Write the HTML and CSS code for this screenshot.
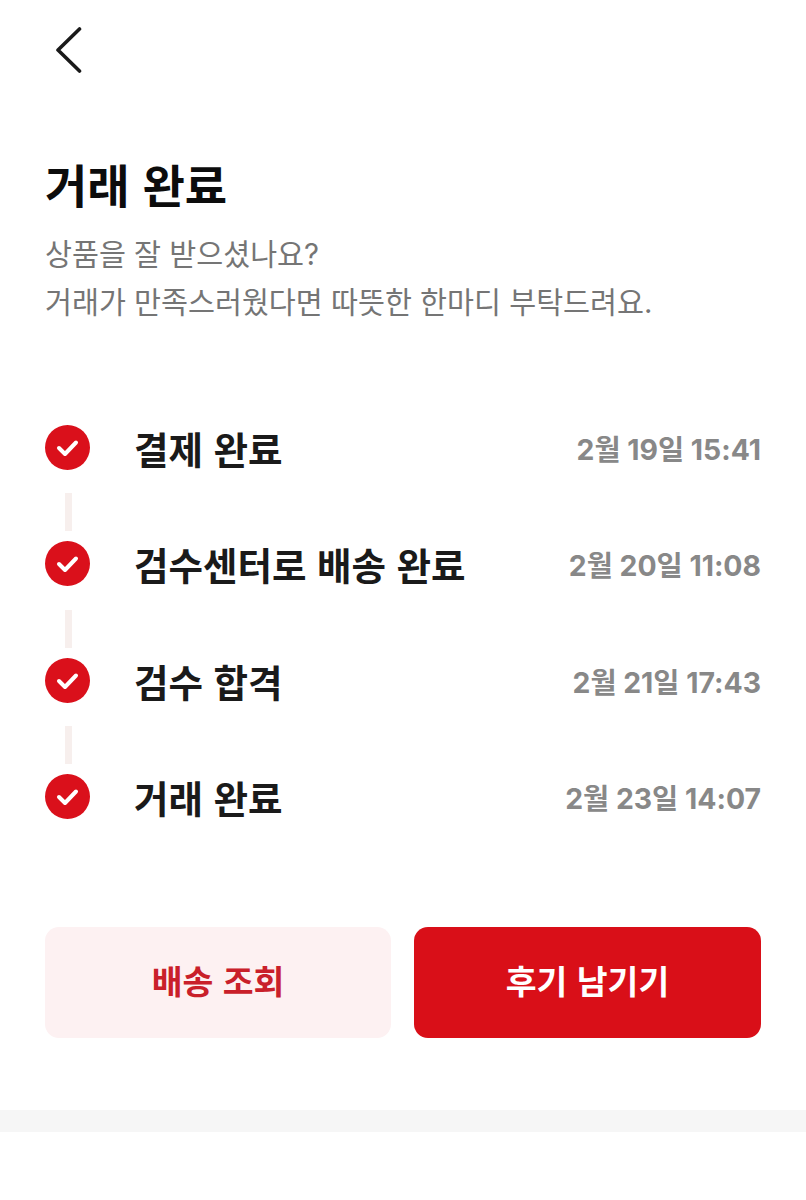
FILE: index.html
```html
<!DOCTYPE html>
<html lang="ko">
<head>
    <meta charset="UTF-8">
    <meta name="viewport" content="width=device-width, initial-scale=1.0">
    <title>거래 완료</title>
    <link rel="stylesheet" href="styles.css">
</head>
<body>
    <div class="top-bar">
        <svg class="back-icon" width="26" height="46" viewBox="0 0 26 46">
            <path d="M23.5 2 L2 23 L23.5 44" fill="none" stroke="#1a1a1a" stroke-width="3.6" stroke-linecap="round" stroke-linejoin="round"/>
        </svg>
    </div>

    <div class="intro">
        <h1>거래 완료</h1>
        <p>상품을 잘 받으셨나요?<br>거래가 만족스러웠다면 따뜻한 한마디 부탁드려요.</p>
    </div>

    <div class="steps">
        <div class="step">
            <svg class="check" width="45" height="45" viewBox="0 0 45 45">
                <circle cx="22.5" cy="22.5" r="22.5" fill="#da101b"/>
                <path d="M14 23 L20 29 L31 17.5" fill="none" stroke="#fff" stroke-width="4" stroke-linecap="round" stroke-linejoin="round"/>
            </svg>
            <div class="step-name">결제 완료</div>
            <div class="step-time">2월 19일 15:41</div>
        </div>
        <div class="line"></div>
        <div class="step">
            <svg class="check" width="45" height="45" viewBox="0 0 45 45">
                <circle cx="22.5" cy="22.5" r="22.5" fill="#da101b"/>
                <path d="M14 23 L20 29 L31 17.5" fill="none" stroke="#fff" stroke-width="4" stroke-linecap="round" stroke-linejoin="round"/>
            </svg>
            <div class="step-name">검수센터로 배송 완료</div>
            <div class="step-time">2월 20일 11:08</div>
        </div>
        <div class="line"></div>
        <div class="step">
            <svg class="check" width="45" height="45" viewBox="0 0 45 45">
                <circle cx="22.5" cy="22.5" r="22.5" fill="#da101b"/>
                <path d="M14 23 L20 29 L31 17.5" fill="none" stroke="#fff" stroke-width="4" stroke-linecap="round" stroke-linejoin="round"/>
            </svg>
            <div class="step-name">검수 합격</div>
            <div class="step-time">2월 21일 17:43</div>
        </div>
        <div class="line"></div>
        <div class="step">
            <svg class="check" width="45" height="45" viewBox="0 0 45 45">
                <circle cx="22.5" cy="22.5" r="22.5" fill="#da101b"/>
                <path d="M14 23 L20 29 L31 17.5" fill="none" stroke="#fff" stroke-width="4" stroke-linecap="round" stroke-linejoin="round"/>
            </svg>
            <div class="step-name">거래 완료</div>
            <div class="step-time">2월 23일 14:07</div>
        </div>
    </div>

    <div class="actions">
        <button class="btn btn-light">배송 조회</button>
        <button class="btn btn-red">후기 남기기</button>
    </div>

    <div class="divider"></div>
</body>
</html>
```

FILE: styles.css
```css
* {
    box-sizing: border-box;
}
body {
    margin: 0;
    background-color: #fff;
    font-family: 'Noto Sans CJK KR', 'Noto Sans', sans-serif;
}
.top-bar {
    height: 144px;
    padding: 27px 0 0 56px;
}
.back-icon {
    display: block;
}
.intro {
    padding: 0 45px;
}
h1 {
    margin: 0;
    height: 87px;
    font-size: 46px;
    line-height: 78px;
    font-weight: 700;
    color: #0c0c0c;
}
.intro p {
    margin: 0;
    font-family: Inter, 'Noto Sans CJK KR', sans-serif;
    font-size: 29.3px;
    line-height: 48px;
    color: #757575;
}
.steps {
    margin-top: 97px;
    padding: 0 45px;
}
.step {
    display: flex;
    align-items: center;
    height: 46px;
}
.check {
    flex-shrink: 0;
}
.step-name {
    flex: 1;
    margin-left: 44px;
    font-size: 37.5px;
    font-weight: 700;
    color: #1a1a1a;
}
.step-time {
    font-family: Inter, 'Noto Sans CJK KR', sans-serif;
    font-size: 28.4px;
    font-weight: 700;
    color: #888;
}
.line {
    width: 7px;
    height: 38px;
    margin: 23px 0 9.5px 20px;
    background-color: #f7efed;
}
.actions {
    display: flex;
    gap: 23px;
    margin-top: 107px;
    padding: 0 45px;
}
.btn {
    flex: 1;
    height: 111px;
    padding: 0 0 5px;
    border: none;
    border-radius: 14px;
    font-family: inherit;
    font-size: 33.5px;
    font-weight: 700;
}
.btn-light {
    flex: 0 0 346px;
    background-color: #fdf1f2;
    color: #c9202a;
}
.btn-red {
    background-color: #d90f18;
    color: #fff;
}
.divider {
    height: 22px;
    margin-top: 72px;
    background-color: #f6f6f6;
}
```
